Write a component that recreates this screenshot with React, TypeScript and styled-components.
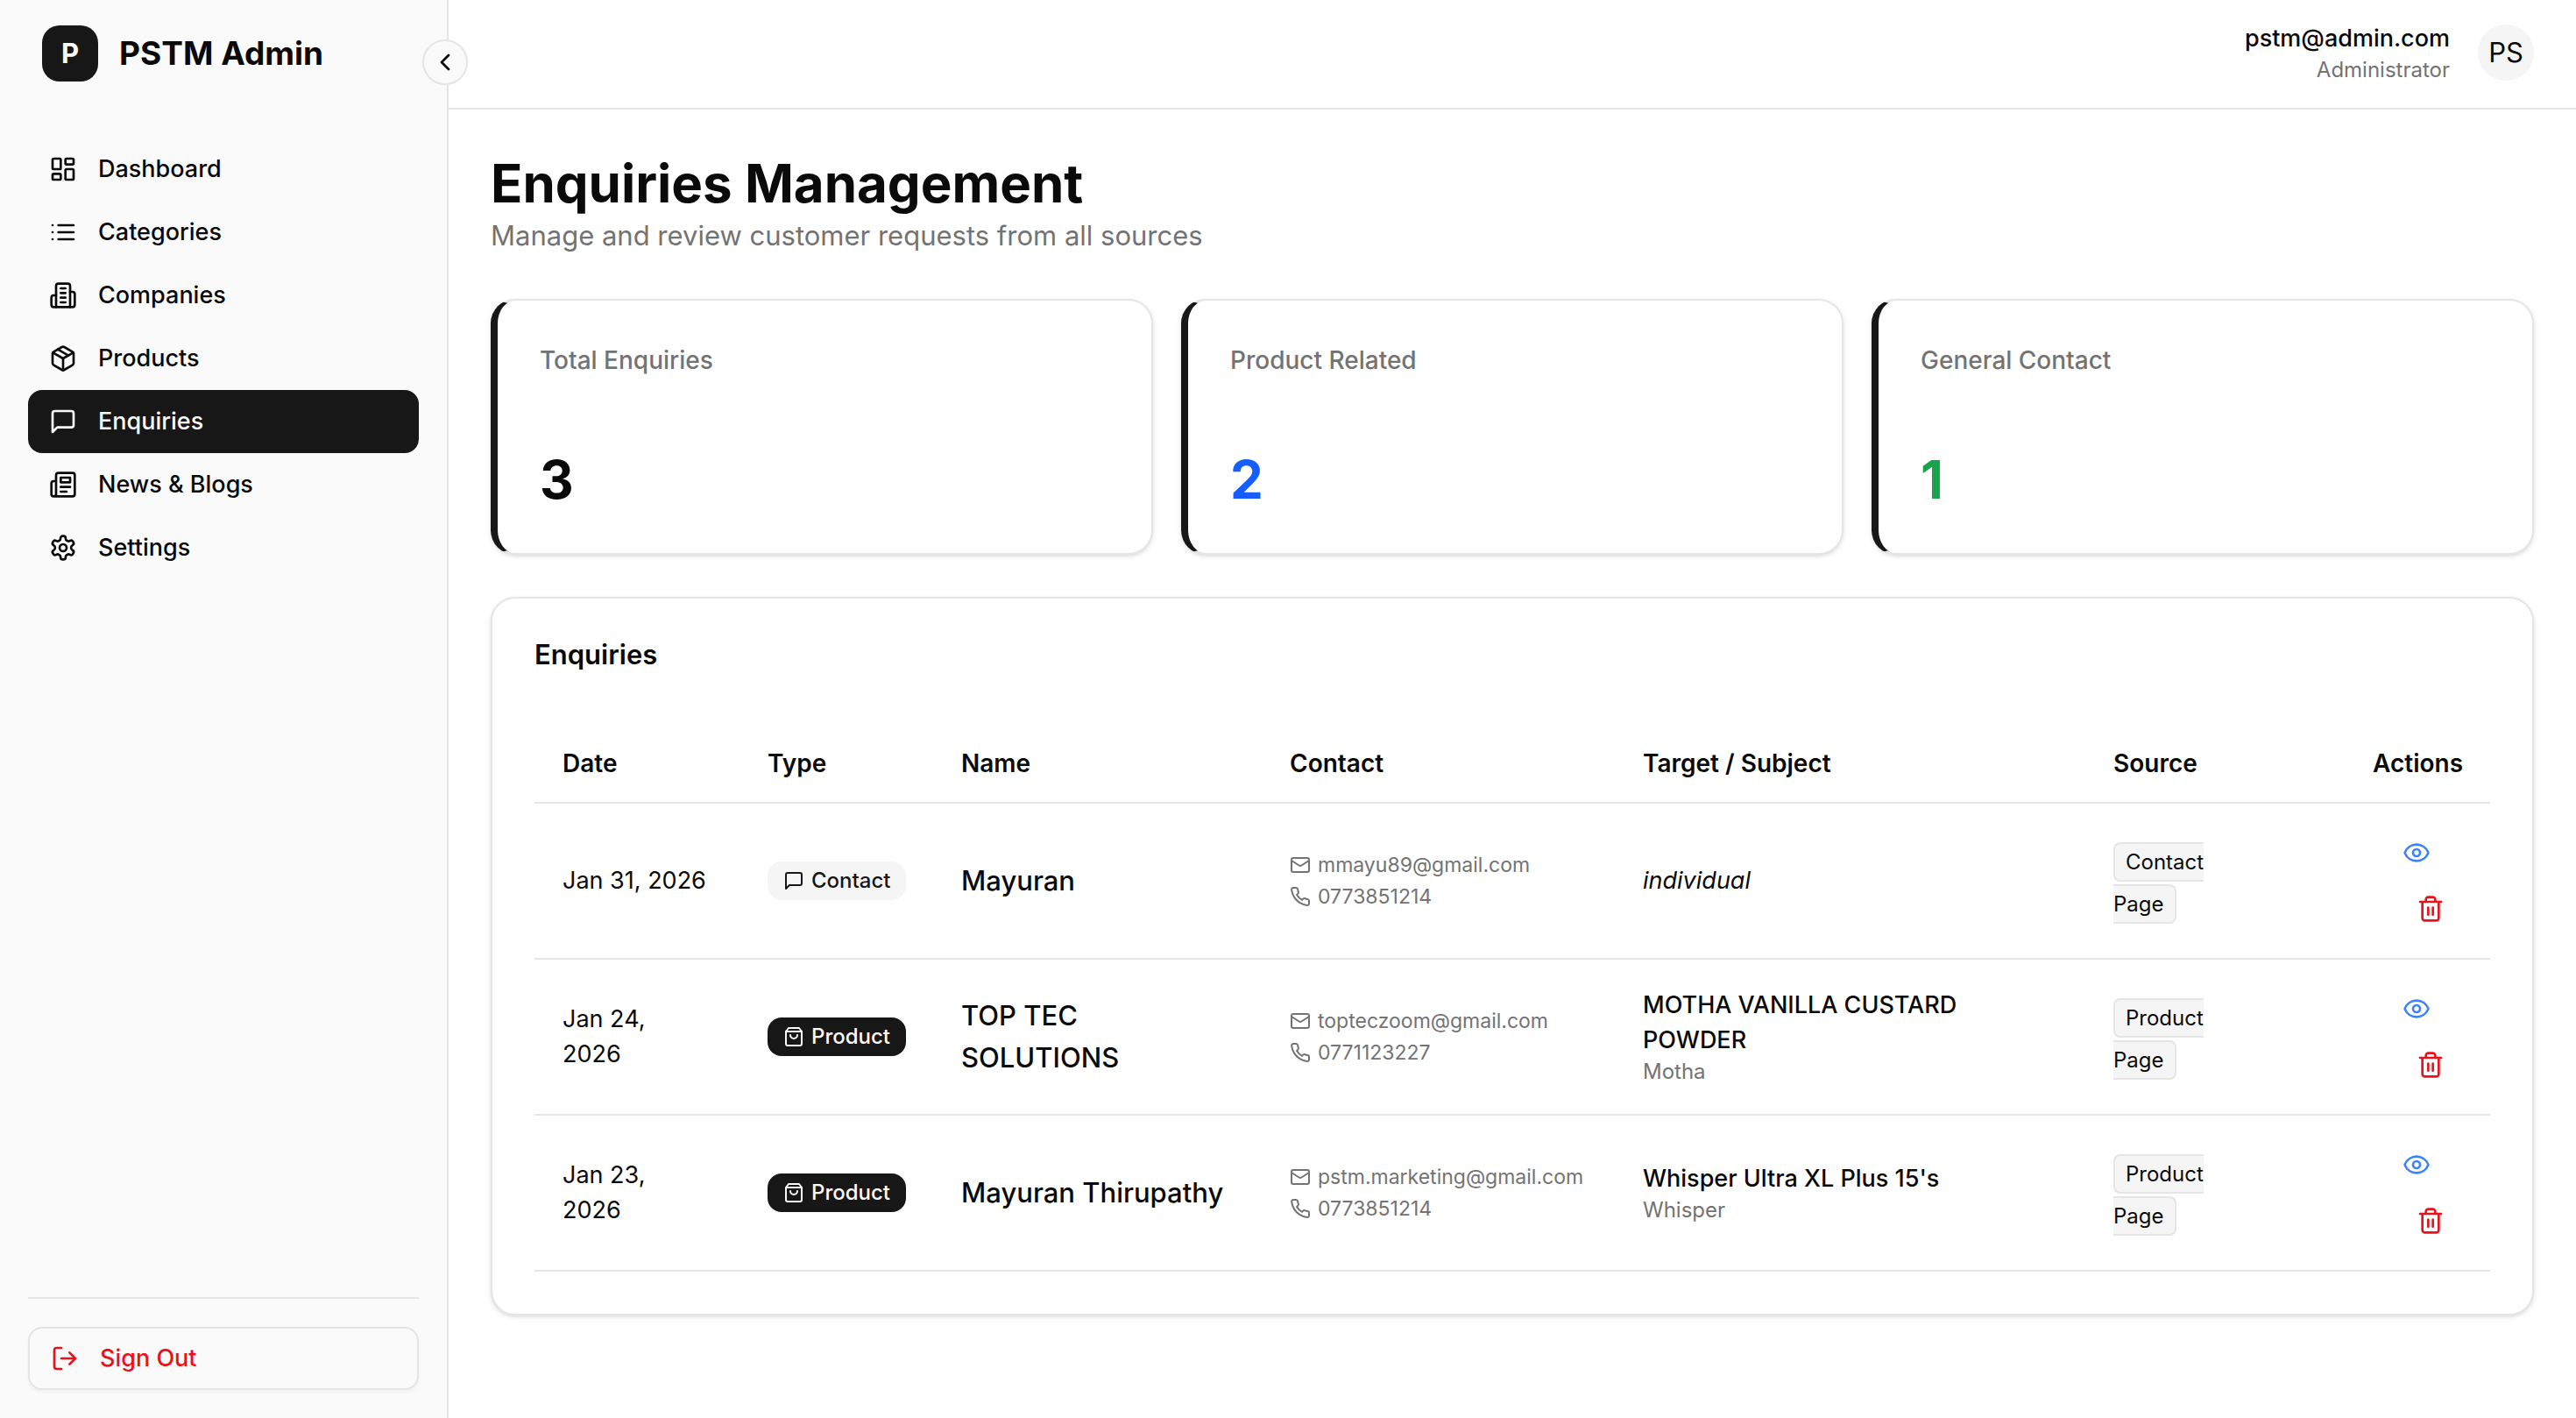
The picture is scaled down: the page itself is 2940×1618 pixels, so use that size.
import React from "react";
import styled, { createGlobalStyle, css } from "styled-components";
import {
  ChevronLeft,
  LayoutDashboard,
  LogOut,
  Mail,
  Package,
} from "lucide-react";

const colors = {
  background: "#ffffff",
  sidebar: "#fafafa",
  foreground: "#0a0a0a",
  primary: "#171717",
  primaryForeground: "#fafafa",
  muted: "#f5f5f5",
  mutedForeground: "#737373",
  border: "#e5e5e5",
  destructive: "#e7131c",
  blue: "#155dfc",
  lightBlue: "#3b82ff",
  green: "#16a34a",
};

const GlobalStyle = createGlobalStyle`
  *, *::before, *::after {
    box-sizing: border-box;
  }
  body {
    margin: 0;
    font-family: Inter, "Liberation Sans", sans-serif;
    font-size: 31px;
    line-height: 48px;
    color: ${colors.foreground};
    background: ${colors.background};
    -webkit-font-smoothing: antialiased;
  }
  h1, h2, p {
    margin: 0;
  }
  svg {
    flex-shrink: 0;
  }
  button {
    font: inherit;
    cursor: pointer;
  }
`;

/* ---------- icons ---------- */

type IconProps = { size?: number };

const Glyph = ({
  size = 32,
  children,
}: IconProps & { children: React.ReactNode }) => (
  <svg
    width={size}
    height={size}
    viewBox="0 0 24 24"
    fill="none"
    stroke="currentColor"
    strokeWidth="2"
    strokeLinecap="round"
    strokeLinejoin="round"
    aria-hidden="true"
  >
    {children}
  </svg>
);

const ListIcon = () => (
  <Glyph>
    <path d="M8 6h13M8 12h13M8 18h13M3 6h.01M3 12h.01M3 18h.01" />
  </Glyph>
);

const BuildingIcon = () => (
  <Glyph>
    <path d="M6 22V4a2 2 0 0 1 2-2h8a2 2 0 0 1 2 2v18Z" />
    <path d="M6 12H4a2 2 0 0 0-2 2v6a2 2 0 0 0 2 2h2" />
    <path d="M18 9h2a2 2 0 0 1 2 2v9a2 2 0 0 1-2 2h-2" />
    <path d="M10 6h4M10 10h4M10 14h4M10 18h4" />
  </Glyph>
);

const MessageIcon = ({ size }: IconProps) => (
  <Glyph size={size}>
    <path d="M21 15a2 2 0 0 1-2 2H7l-4 4V5a2 2 0 0 1 2-2h14a2 2 0 0 1 2 2z" />
  </Glyph>
);

const NewspaperIcon = () => (
  <Glyph>
    <path d="M4 22h16a2 2 0 0 0 2-2V4a2 2 0 0 0-2-2H8a2 2 0 0 0-2 2v16a2 2 0 0 1-2 2Zm0 0a2 2 0 0 1-2-2v-9c0-1.1.9-2 2-2h2" />
    <path d="M18 14h-8M15 18h-5M10 6h8v4h-8V6Z" />
  </Glyph>
);

const SettingsIcon = () => (
  <Glyph>
    <path d="M12.22 2h-.44a2 2 0 0 0-2 2v.18a2 2 0 0 1-1 1.73l-.43.25a2 2 0 0 1-2 0l-.15-.08a2 2 0 0 0-2.73.73l-.22.38a2 2 0 0 0 .73 2.73l.15.1a2 2 0 0 1 1 1.72v.51a2 2 0 0 1-1 1.74l-.15.09a2 2 0 0 0-.73 2.73l.22.38a2 2 0 0 0 2.73.73l.15-.08a2 2 0 0 1 2 0l.43.25a2 2 0 0 1 1 1.73V20a2 2 0 0 0 2 2h.44a2 2 0 0 0 2-2v-.18a2 2 0 0 1 1-1.73l.43-.25a2 2 0 0 1 2 0l.15.08a2 2 0 0 0 2.73-.73l.22-.39a2 2 0 0 0-.73-2.73l-.15-.08a2 2 0 0 1-1-1.74v-.5a2 2 0 0 1 1-1.74l.15-.09a2 2 0 0 0 .73-2.73l-.22-.38a2 2 0 0 0-2.73-.73l-.15.08a2 2 0 0 1-2 0l-.43-.25a2 2 0 0 1-1-1.73V4a2 2 0 0 0-2-2z" />
    <circle cx="12" cy="12" r="3" />
  </Glyph>
);

const BagIcon = ({ size }: IconProps) => (
  <Glyph size={size}>
    <path d="M6 2 3 6v14a2 2 0 0 0 2 2h14a2 2 0 0 0 2-2V6l-3-4Z" />
    <path d="M3 6h18M16 10a4 4 0 0 1-8 0" />
  </Glyph>
);

const PhoneIcon = ({ size }: IconProps) => (
  <Glyph size={size}>
    <path d="M22 16.92v3a2 2 0 0 1-2.18 2 19.79 19.79 0 0 1-8.63-3.07 19.5 19.5 0 0 1-6-6 19.79 19.79 0 0 1-3.07-8.67A2 2 0 0 1 4.11 2h3a2 2 0 0 1 2 1.72 12.84 12.84 0 0 0 .7 2.81 2 2 0 0 1-.45 2.11L8.09 9.91a16 16 0 0 0 6 6l1.27-1.27a2 2 0 0 1 2.11-.45 12.84 12.84 0 0 0 2.81.7A2 2 0 0 1 22 16.92z" />
  </Glyph>
);

const EyeIcon = () => (
  <Glyph>
    <path d="M2.062 12.348a1 1 0 0 1 0-.696 10.75 10.75 0 0 1 19.876 0 1 1 0 0 1 0 .696 10.75 10.75 0 0 1-19.876 0" />
    <circle cx="12" cy="12" r="3" />
  </Glyph>
);

const TrashIcon = () => (
  <Glyph>
    <path d="M3 6h18M19 6v14c0 1-1 2-2 2H7c-1 0-2-1-2-2V6M8 6V4c0-1 1-2 2-2h4c1 0 2 1 2 2v2M10 11v6M14 11v6" />
  </Glyph>
);

/* ---------- shell ---------- */

const Shell = styled.div`
  display: flex;
  min-height: 100vh;
`;

const Sidebar = styled.aside`
  position: relative;
  flex: 0 0 512px;
  display: flex;
  flex-direction: column;
  padding: 29px 32px 32px;
  background: ${colors.sidebar};
  border-right: 2px solid ${colors.border};
`;

const Brand = styled.div`
  display: flex;
  align-items: center;
  gap: 24px;
  padding: 0 16px;
  font-size: 37px;
  font-weight: 700;
`;

const BrandMark = styled.span`
  display: flex;
  align-items: center;
  justify-content: center;
  width: 64px;
  height: 64px;
  border-radius: 20px;
  background: ${colors.primary};
  color: ${colors.primaryForeground};
  font-size: 31px;
`;

const CollapseButton = styled.button`
  position: absolute;
  top: 45px;
  right: -24px;
  display: flex;
  align-items: center;
  justify-content: center;
  width: 52px;
  height: 52px;
  padding: 0;
  border: 2px solid ${colors.border};
  border-radius: 50%;
  background: ${colors.sidebar};
  color: ${colors.foreground};
`;

const Nav = styled.nav`
  flex: 1;
  display: flex;
  flex-direction: column;
  margin-top: 64px;
`;

const NavLink = styled.a<{ $active?: boolean }>`
  display: flex;
  align-items: center;
  gap: 24px;
  height: 72px;
  padding: 0 24px;
  border-radius: 16px;
  color: ${colors.foreground};
  font-size: 27px;
  font-weight: 500;
  text-decoration: none;
  ${({ $active }) =>
    $active &&
    css`
      background: ${colors.primary};
      color: ${colors.primaryForeground};
    `}
`;

const SidebarFooter = styled.div`
  padding-top: 32px;
  border-top: 2px solid ${colors.border};
`;

const SignOutButton = styled.button`
  display: flex;
  align-items: center;
  gap: 24px;
  width: 100%;
  height: 72px;
  padding: 0 24px;
  border: 2px solid ${colors.border};
  border-radius: 16px;
  background: ${colors.sidebar};
  box-shadow: 0 2px 4px rgba(0, 0, 0, 0.05);
  color: ${colors.destructive};
  font-size: 27px;
  font-weight: 500;
`;

const Content = styled.div`
  flex: 1;
  min-width: 0;
`;

const Header = styled.header`
  display: flex;
  align-items: center;
  justify-content: flex-end;
  gap: 32px;
  height: 125px;
  padding: 0 48px 3px;
  border-bottom: 2px solid ${colors.border};
`;

const UserInfo = styled.div`
  text-align: right;
`;

const UserEmail = styled.p`
  font-size: 27px;
  line-height: 40px;
  font-weight: 500;
`;

const UserRole = styled.p`
  font-size: 24px;
  line-height: 32px;
  color: ${colors.mutedForeground};
`;

const Avatar = styled.span`
  display: flex;
  align-items: center;
  justify-content: center;
  width: 64px;
  height: 64px;
  border-radius: 50%;
  background: ${colors.muted};
`;

/* ---------- page ---------- */

const Page = styled.main`
  display: flex;
  flex-direction: column;
  gap: 48px;
  padding: 48px;
`;

const Title = styled.h1`
  font-size: 60px;
  line-height: 72px;
  font-weight: 700;
`;

const Subtitle = styled.p`
  color: ${colors.mutedForeground};
`;

const Card = styled.section`
  padding: 48px;
  border: 2px solid ${colors.border};
  border-radius: 28px;
  background: ${colors.background};
  box-shadow: 0 2px 6px rgba(0, 0, 0, 0.1), 0 2px 4px -2px rgba(0, 0, 0, 0.1);
`;

const StatGrid = styled.div`
  display: grid;
  grid-template-columns: repeat(3, 1fr);
  gap: 32px;
`;

const StatCard = styled(Card)`
  display: flex;
  flex-direction: column;
  gap: 80px;
  border-left: 8px solid ${colors.primary};
`;

const StatLabel = styled.p`
  font-size: 28px;
  line-height: 40px;
  font-weight: 500;
  color: ${colors.mutedForeground};
`;

const StatValue = styled.p<{ $color?: string }>`
  font-size: 60px;
  line-height: 72px;
  font-weight: 700;
  color: ${({ $color }) => $color || colors.foreground};
`;

const CardTitle = styled.h2`
  font-size: 31px;
  line-height: 32px;
  font-weight: 600;
`;

/* ---------- table ---------- */

const Table = styled.table`
  width: 100%;
  margin-top: 64px;
  table-layout: fixed;
  border-collapse: separate;
  border-spacing: 0;
`;

const Th = styled.th<{ $width?: number; $right?: boolean }>`
  width: ${({ $width }) => ($width ? `${$width}px` : "auto")};
  height: 90px;
  padding: 0 32px;
  border-bottom: 2px solid ${colors.border};
  font-size: 28px;
  line-height: 40px;
  font-weight: 600;
  text-align: ${({ $right }) => ($right ? "right" : "left")};
`;

const Td = styled.td`
  padding: 24px 32px;
  border-bottom: 2px solid ${colors.border};
  vertical-align: middle;
`;

const DateText = styled.div`
  font-size: 27px;
  line-height: 40px;
  white-space: pre-line;
`;

const TypeBadge = styled.span<{ $solid?: boolean }>`
  display: flex;
  align-items: center;
  gap: 8px;
  width: fit-content;
  height: 44px;
  padding: 0 18px;
  border-radius: 16px;
  font-size: 24px;
  font-weight: 500;
  background: ${({ $solid }) => ($solid ? colors.primary : colors.muted)};
  color: ${({ $solid }) => ($solid ? colors.primaryForeground : colors.primary)};
`;

const Name = styled.div`
  font-weight: 500;
  white-space: pre-line;
`;

const ContactList = styled.div`
  display: flex;
  flex-direction: column;
  gap: 4px;
`;

const ContactLine = styled.span`
  display: flex;
  align-items: center;
  gap: 8px;
  font-size: 23px;
  line-height: 32px;
  white-space: nowrap;
  color: ${colors.mutedForeground};
`;

const Target = styled.div`
  max-width: 400px;
  font-size: 27px;
  line-height: 40px;
  font-weight: 500;
`;

const Subject = styled.div`
  font-size: 27px;
  line-height: 40px;
  font-style: italic;
`;

const Company = styled.div`
  font-size: 24px;
  line-height: 32px;
  color: ${colors.mutedForeground};
`;

const SourceTag = styled.span`
  padding: 6px 12px;
  border: 2px solid ${colors.border};
  border-radius: 8px;
  background: ${colors.muted};
  font-size: 24px;
  line-height: 32px;
  white-space: pre-line;
`;

const Actions = styled.div`
  display: flex;
  flex-direction: column;
  align-items: flex-end;
`;

const ActionButton = styled.button<{ $view?: boolean }>`
  display: flex;
  align-items: center;
  justify-content: center;
  width: 72px;
  height: 64px;
  margin-right: ${({ $view }) => ($view ? "16px" : 0)};
  padding: 0;
  border: 0;
  border-radius: 16px;
  background: none;
  color: ${({ $view }) => ($view ? colors.lightBlue : colors.destructive)};
`;

type NavItem = { title: string; icon: React.ReactNode; active?: boolean };

const navItems: NavItem[] = [
  { title: "Dashboard", icon: <LayoutDashboard size={32} /> },
  { title: "Categories", icon: <ListIcon /> },
  { title: "Companies", icon: <BuildingIcon /> },
  { title: "Products", icon: <Package size={32} /> },
  { title: "Enquiries", icon: <MessageIcon />, active: true },
  { title: "News & Blogs", icon: <NewspaperIcon /> },
  { title: "Settings", icon: <SettingsIcon /> },
];

const stats = [
  { label: "Total Enquiries", value: 3 },
  { label: "Product Related", value: 2, color: colors.blue },
  { label: "General Contact", value: 1, color: colors.green },
];

type Enquiry = {
  date: string;
  type: "Contact" | "Product";
  name: string;
  email: string;
  phone: string;
  subject?: string;
  product?: string;
  company?: string;
};

const enquiries: Enquiry[] = [
  {
    date: "Jan 31, 2026",
    type: "Contact",
    name: "Mayuran",
    email: "mmayu89@gmail.com",
    phone: "0773851214",
    subject: "individual",
  },
  {
    date: "Jan 24,\n2026",
    type: "Product",
    name: "TOP TEC\nSOLUTIONS",
    email: "topteczoom@gmail.com",
    phone: "0771123227",
    product: "MOTHA VANILLA CUSTARD POWDER",
    company: "Motha",
  },
  {
    date: "Jan 23,\n2026",
    type: "Product",
    name: "Mayuran Thirupathy",
    email: "pstm.marketing@gmail.com",
    phone: "0773851214",
    product: "Whisper Ultra XL Plus 15's",
    company: "Whisper",
  },
];

const EnquiryRow = ({ enquiry }: { enquiry: Enquiry }) => {
  const isProduct = enquiry.type === "Product";
  return (
    <tr>
      <Td>
        <DateText>{enquiry.date}</DateText>
      </Td>
      <Td>
        <TypeBadge $solid={isProduct}>
          {isProduct ? <BagIcon size={24} /> : <MessageIcon size={24} />}
          {enquiry.type}
        </TypeBadge>
      </Td>
      <Td>
        <Name>{enquiry.name}</Name>
      </Td>
      <Td>
        <ContactList>
          <ContactLine>
            <Mail size={24} />
            {enquiry.email}
          </ContactLine>
          <ContactLine>
            <PhoneIcon size={24} />
            {enquiry.phone}
          </ContactLine>
        </ContactList>
      </Td>
      <Td>
        {enquiry.subject && <Subject>{enquiry.subject}</Subject>}
        {enquiry.product && <Target>{enquiry.product}</Target>}
        {enquiry.company && <Company>{enquiry.company}</Company>}
      </Td>
      <Td>
        <SourceTag>{`${enquiry.type}\nPage`}</SourceTag>
      </Td>
      <Td>
        <Actions>
          <ActionButton type="button" aria-label="View enquiry" $view>
            <EyeIcon />
          </ActionButton>
          <ActionButton type="button" aria-label="Delete enquiry">
            <TrashIcon />
          </ActionButton>
        </Actions>
      </Td>
    </tr>
  );
};

const App = () => {
  return (
    <>
      <GlobalStyle />
      <Shell>
        <Sidebar>
          <Brand>
            <BrandMark>P</BrandMark>
            PSTM Admin
          </Brand>
          <CollapseButton type="button" aria-label="Collapse sidebar">
            <ChevronLeft size={32} />
          </CollapseButton>
          <Nav>
            {navItems.map(({ title, icon, active }) => (
              <NavLink key={title} href="#" $active={active}>
                {icon}
                {title}
              </NavLink>
            ))}
          </Nav>
          <SidebarFooter>
            <SignOutButton type="button">
              <LogOut size={32} />
              Sign Out
            </SignOutButton>
          </SidebarFooter>
        </Sidebar>
        <Content>
          <Header>
            <UserInfo>
              <UserEmail>pstm@admin.com</UserEmail>
              <UserRole>Administrator</UserRole>
            </UserInfo>
            <Avatar>PS</Avatar>
          </Header>
          <Page>
            <div>
              <Title>Enquiries Management</Title>
              <Subtitle>
                Manage and review customer requests from all sources
              </Subtitle>
            </div>
            <StatGrid>
              {stats.map(({ label, value, color }) => (
                <StatCard key={label}>
                  <StatLabel>{label}</StatLabel>
                  <StatValue $color={color}>{value}</StatValue>
                </StatCard>
              ))}
            </StatGrid>
            <Card>
              <CardTitle>Enquiries</CardTitle>
              <Table>
                <thead>
                  <tr>
                    <Th $width={234}>Date</Th>
                    <Th $width={221}>Type</Th>
                    <Th $width={375}>Name</Th>
                    <Th $width={403}>Contact</Th>
                    <Th>Target / Subject</Th>
                    <Th $width={296}>Source</Th>
                    <Th $width={166} $right>
                      Actions
                    </Th>
                  </tr>
                </thead>
                <tbody>
                  {enquiries.map((enquiry) => (
                    <EnquiryRow key={enquiry.date} enquiry={enquiry} />
                  ))}
                </tbody>
              </Table>
            </Card>
          </Page>
        </Content>
      </Shell>
    </>
  );
};

export default App;
